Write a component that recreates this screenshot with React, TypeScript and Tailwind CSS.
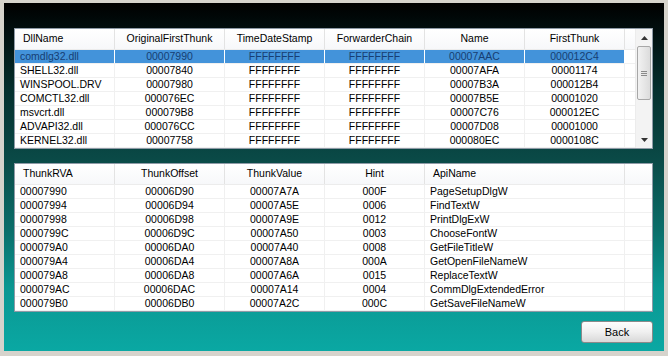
import React from "react"

const dlls = [
  ["comdlg32.dll", "00007990", "FFFFFFFF", "FFFFFFFF", "00007AAC", "000012C4"],
  ["SHELL32.dll", "00007840", "FFFFFFFF", "FFFFFFFF", "00007AFA", "00001174"],
  ["WINSPOOL.DRV", "00007980", "FFFFFFFF", "FFFFFFFF", "00007B3A", "000012B4"],
  ["COMCTL32.dll", "000076EC", "FFFFFFFF", "FFFFFFFF", "00007B5E", "00001020"],
  ["msvcrt.dll", "000079B8", "FFFFFFFF", "FFFFFFFF", "00007C76", "000012EC"],
  ["ADVAPI32.dll", "000076CC", "FFFFFFFF", "FFFFFFFF", "00007D08", "00001000"],
  ["KERNEL32.dll", "00007758", "FFFFFFFF", "FFFFFFFF", "000080EC", "0000108C"],
]

const thunks = [
  ["00007990", "00006D90", "00007A7A", "000F", "PageSetupDlgW"],
  ["00007994", "00006D94", "00007A5E", "0006", "FindTextW"],
  ["00007998", "00006D98", "00007A9E", "0012", "PrintDlgExW"],
  ["0000799C", "00006D9C", "00007A50", "0003", "ChooseFontW"],
  ["000079A0", "00006DA0", "00007A40", "0008", "GetFileTitleW"],
  ["000079A4", "00006DA4", "00007A8A", "000A", "GetOpenFileNameW"],
  ["000079A8", "00006DA8", "00007A6A", "0015", "ReplaceTextW"],
  ["000079AC", "00006DAC", "00007A14", "0004", "CommDlgExtendedError"],
  ["000079B0", "00006DB0", "00007A2C", "000C", "GetSaveFileNameW"],
]

const topCols = [
  { label: "DllName", w: "w-[100px]", left: true },
  { label: "OriginalFirstThunk", w: "w-[110px]" },
  { label: "TimeDateStamp", w: "w-[100px]" },
  { label: "ForwarderChain", w: "w-[100px]" },
  { label: "Name", w: "w-[100px]" },
  { label: "FirstThunk", w: "w-[100px]" },
]

const bottomCols = [
  { label: "ThunkRVA", w: "w-[100px]", left: true },
  { label: "ThunkOffset", w: "w-[110px]" },
  { label: "ThunkValue", w: "w-[100px]" },
  { label: "Hint", w: "w-[100px]" },
  { label: "ApiName", w: "w-[200px]", left: true },
]

type Col = { label: string; w: string; left?: boolean }

function Header({ cols }: { cols: Col[] }) {
  return (
    <div className="flex h-[21px] shrink-0 bg-gradient-to-b from-white to-[#f7f8fa] border-b border-[#ececec]">
      {cols.map((c) => (
        <div
          key={c.label}
          className={`${c.w} h-full flex items-center border-r border-[#e3e3e3] ${c.left ? "justify-start pl-[8px]" : "justify-center"}`}
        >
          {c.label}
        </div>
      ))}
      <div className="flex-1" />
    </div>
  )
}

function Row({ cols, cells, selected }: { cols: Col[]; cells: string[]; selected?: boolean }) {
  return (
    <div className="flex h-[14px] shrink-0 border-b border-[#f0f0f0]">
      {cols.map((c, i) => (
        <div
          key={i}
          className={`${c.w} h-full flex items-center leading-none ${selected ? "bg-[#4393da] text-[#173e72] border-r border-white" : "border-r border-[#f0f0f0]"} ${c.left ? "justify-start pl-[5px]" : "justify-center"}`}
        >
          {cells[i]}
        </div>
      ))}
      <div className="flex-1" />
    </div>
  )
}

function Scrollbar() {
  return (
    <div className="w-[17px] h-full flex flex-col bg-[#f3f3f3] border-l border-[#ececec]">
      <div className="h-[17px] flex items-center justify-center">
        <svg width="7" height="4" viewBox="0 0 7 4"><path d="M0 4 L3.5 0 L7 4 Z" fill="#333" /></svg>
      </div>
      <div className="mx-[1px] h-[54px] rounded-[2px] border border-[#a7a7a7] bg-gradient-to-r from-[#f2f2f2] to-[#dcdcdc] flex items-center justify-center">
        <div className="flex flex-col gap-[1px]">
          <div className="w-[6px] h-[1px] bg-[#8a8a8a]" />
          <div className="w-[6px] h-[1px] bg-[#8a8a8a]" />
          <div className="w-[6px] h-[1px] bg-[#8a8a8a]" />
        </div>
      </div>
      <div className="flex-1" />
      <div className="h-[17px] flex items-center justify-center">
        <svg width="7" height="4" viewBox="0 0 7 4"><path d="M0 0 L3.5 4 L7 0 Z" fill="#333" /></svg>
      </div>
    </div>
  )
}

export default function App() {
  return (
    <div className="w-[668px] h-[356px] bg-[#d4d0c8] border-t-[3px] border-l-[4px] border-r-[4px] border-b-[5px] border-[#d6d3cc] font-['Liberation_Sans',Arial,sans-serif] text-[10.5px] text-black">
      <div className="w-full h-full flex flex-col pl-[10px] pr-[11px] pt-[25px] bg-[linear-gradient(to_bottom,#000000_0%,#010b0b_6%,#05302e_25%,#0a4a47_45%,#0b6e6a_65%,#0b9792_82%,#0aa8a3_100%)]">
        {/* dll list */}
        <div className="h-[121px] shrink-0 flex border border-[#8e9aa6] bg-white">
          <div className="flex-1 flex flex-col">
            <Header cols={topCols} />
            {dlls.map((r, i) => (
              <Row key={r[0]} cols={topCols} cells={r} selected={i === 0} />
            ))}
          </div>
          <Scrollbar />
        </div>

        {/* thunk list */}
        <div className="mt-[14px] h-[149px] shrink-0 flex flex-col border border-[#8e9aa6] bg-white">
          <Header cols={bottomCols} />
          {thunks.map((r) => (
            <Row key={r[0]} cols={bottomCols} cells={r} />
          ))}
        </div>

        <div className="mt-[9px] flex justify-end">
          <button className="w-[72px] h-[22px] rounded-[3px] border border-[#8a8a8a] bg-gradient-to-b from-[#fdfdfd] via-[#f0f0f0] to-[#d8d8d8] text-[11px] text-black">
            Back
          </button>
        </div>
      </div>
    </div>
  )
}
